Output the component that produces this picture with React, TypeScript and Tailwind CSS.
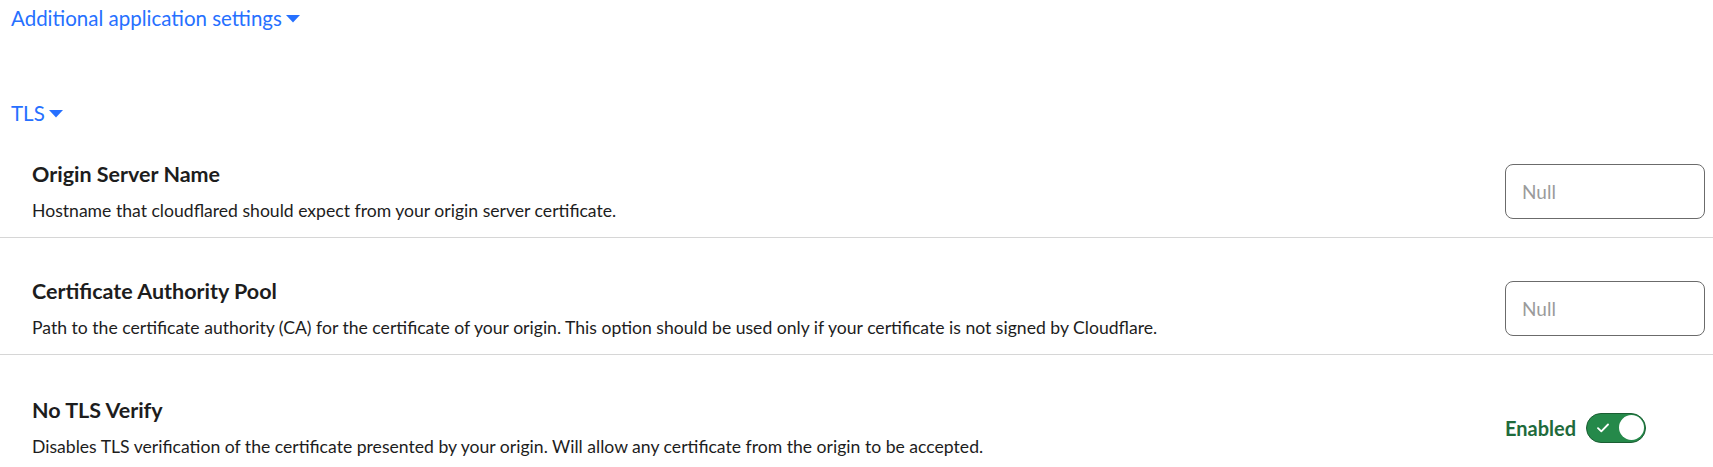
import { useState } from "react";

const Caret = () => (
  <svg width="14" height="8" viewBox="0 0 14 8" className="ml-[4px] mt-[2px] fill-current">
    <path d="M0 0h14L7 7.5z" />
  </svg>
);

const SectionToggle = ({ label, className }: { label: string; className?: string }) => (
  <button className={"flex items-center pl-[11px] text-[20.5px] leading-[24px] text-[#2670ff] " + (className ?? "")}>
    {label}
    <Caret />
  </button>
);

const Row = ({
  title,
  description,
  children,
  className,
}: {
  title: string;
  description: string;
  children: React.ReactNode;
  className?: string;
}) => (
  <div className={"flex items-center justify-between border-b border-[#d6d6d6] pl-8 pr-2 " + (className ?? "")}>
    <div className="flex flex-col">
      <h3 className="text-[21.5px] leading-[28px] font-bold text-[#1d1d1d]">{title}</h3>
      <p className="mt-[11px] text-[17.6px] leading-[24px] text-[#1d1d1d]">{description}</p>
    </div>
    <div className="flex w-[200px] shrink-0 items-center">{children}</div>
  </div>
);

const NullInput = () => (
  <input
    placeholder="Null"
    className="h-[55px] w-[200px] rounded-[8px] border border-[#6b6b6b] bg-white pl-4 text-[19px] text-[#222] outline-none placeholder:text-[#9b9b9b]"
  />
);

const Switch = () => {
  const [on, setOn] = useState(true);
  return (
    <div className="flex items-center gap-[10px]">
      <span className="text-[20px] font-bold text-[#1f6b3c]">{on ? "Enabled" : "Disabled"}</span>
      <button
        onClick={() => setOn(!on)}
        className="relative flex h-[30px] w-[60px] items-center rounded-full border border-[#1b5e33] bg-[#25894a]"
      >
        <svg width="12" height="10" viewBox="0 0 12 10" className="ml-[10px]">
          <path d="M1 5.2l3.3 3.2L11 1.5" fill="none" stroke="white" strokeWidth="1.8" strokeLinecap="round" strokeLinejoin="round" />
        </svg>
        <span className="absolute right-[1px] top-[1.5px] h-[25px] w-[25px] rounded-full bg-white" />
      </button>
    </div>
  );
};

export default function App() {
  return (
    <div className="min-h-screen bg-white pt-[6px] font-['Lato',sans-serif]">
      <SectionToggle label="Additional application settings" />
      <SectionToggle label="TLS" className="mt-[71px]" />
      <Row
        className="pt-[35px] pb-[14px]"
        title="Origin Server Name"
        description="Hostname that cloudflared should expect from your origin server certificate."
      >
        <NullInput />
      </Row>
      <Row
        className="pt-[39px] pb-[14px]"
        title="Certificate Authority Pool"
        description="Path to the certificate authority (CA) for the certificate of your origin. This option should be used only if your certificate is not signed by Cloudflare."
      >
        <NullInput />
      </Row>
      <Row
        className="border-b-0 pt-[41px] pb-[14px]"
        title="No TLS Verify"
        description="Disables TLS verification of the certificate presented by your origin. Will allow any certificate from the origin to be accepted."
      >
        <Switch />
      </Row>
    </div>
  );
}
